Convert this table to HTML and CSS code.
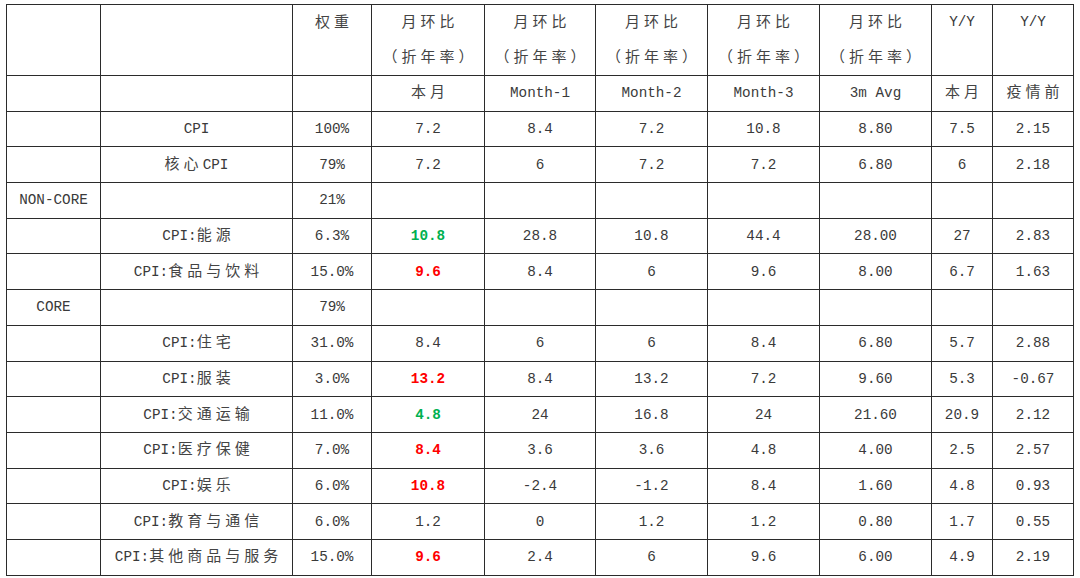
FILE: index.html
```html
<!DOCTYPE html>
<html lang="zh-CN">
<head>
<meta charset="utf-8">
<title>CPI</title>
<link rel="stylesheet" href="styles.css">
</head>
<body>
<table class="cpi">
<colgroup>
<col class="c1"><col class="c2"><col class="c3"><col class="c4"><col class="c5"><col class="c6"><col class="c7"><col class="c8"><col class="c9"><col class="c10">
</colgroup>
<tr class="head">
<td></td><td></td>
<td><span class="zh">权重</span></td>
<td><span class="zh">月环比</span><br><span class="zh">（折年率）</span></td>
<td><span class="zh">月环比</span><br><span class="zh">（折年率）</span></td>
<td><span class="zh">月环比</span><br><span class="zh">（折年率）</span></td>
<td><span class="zh">月环比</span><br><span class="zh">（折年率）</span></td>
<td><span class="zh">月环比</span><br><span class="zh">（折年率）</span></td>
<td>Y/Y</td>
<td>Y/Y</td>
</tr>
<tr><td></td><td></td><td></td><td><span class="zh">本月</span></td><td>Month-1</td><td>Month-2</td><td>Month-3</td><td>3m Avg</td><td><span class="zh">本月</span></td><td><span class="zh">疫情前</span></td></tr>
<tr><td></td><td>CPI</td><td>100%</td><td>7.2</td><td>8.4</td><td>7.2</td><td>10.8</td><td>8.80</td><td>7.5</td><td>2.15</td></tr>
<tr><td></td><td><span class="zh mid">核心</span>CPI</td><td>79%</td><td>7.2</td><td>6</td><td>7.2</td><td>7.2</td><td>6.80</td><td>6</td><td>2.18</td></tr>
<tr><td>NON-CORE</td><td></td><td>21%</td><td></td><td></td><td></td><td></td><td></td><td></td><td></td></tr>
<tr><td></td><td>CPI:<span class="zh">能源</span></td><td>6.3%</td><td class="up">10.8</td><td>28.8</td><td>10.8</td><td>44.4</td><td>28.00</td><td>27</td><td>2.83</td></tr>
<tr><td></td><td>CPI:<span class="zh">食品与饮料</span></td><td>15.0%</td><td class="dn">9.6</td><td>8.4</td><td>6</td><td>9.6</td><td>8.00</td><td>6.7</td><td>1.63</td></tr>
<tr><td>CORE</td><td></td><td>79%</td><td></td><td></td><td></td><td></td><td></td><td></td><td></td></tr>
<tr><td></td><td>CPI:<span class="zh">住宅</span></td><td>31.0%</td><td>8.4</td><td>6</td><td>6</td><td>8.4</td><td>6.80</td><td>5.7</td><td>2.88</td></tr>
<tr><td></td><td>CPI:<span class="zh">服装</span></td><td>3.0%</td><td class="dn">13.2</td><td>8.4</td><td>13.2</td><td>7.2</td><td>9.60</td><td>5.3</td><td>-0.67</td></tr>
<tr><td></td><td>CPI:<span class="zh">交通运输</span></td><td>11.0%</td><td class="up">4.8</td><td>24</td><td>16.8</td><td>24</td><td>21.60</td><td>20.9</td><td>2.12</td></tr>
<tr><td></td><td>CPI:<span class="zh">医疗保健</span></td><td>7.0%</td><td class="dn">8.4</td><td>3.6</td><td>3.6</td><td>4.8</td><td>4.00</td><td>2.5</td><td>2.57</td></tr>
<tr><td></td><td>CPI:<span class="zh">娱乐</span></td><td>6.0%</td><td class="dn">10.8</td><td>-2.4</td><td>-1.2</td><td>8.4</td><td>1.60</td><td>4.8</td><td>0.93</td></tr>
<tr><td></td><td>CPI:<span class="zh">教育与通信</span></td><td>6.0%</td><td>1.2</td><td>0</td><td>1.2</td><td>1.2</td><td>0.80</td><td>1.7</td><td>0.55</td></tr>
<tr><td></td><td>CPI:<span class="zh">其他商品与服务</span></td><td>15.0%</td><td class="dn">9.6</td><td>2.4</td><td>6</td><td>9.6</td><td>6.00</td><td>4.9</td><td>2.19</td></tr>
</table>
</body>
</html>
```

FILE: styles.css
```css
html, body {
  margin: 0;
  background: #ffffff;
}
body {
  padding: 4px 7px 0 6px;
}
.cpi {
  border-collapse: collapse;
  table-layout: fixed;
  width: 1067px;
  font-family: "Liberation Mono", "Noto Sans CJK SC", monospace;
  font-size: 14.3px;
  color: #3a3a3a;
}
.c1 { width: 94px; }
.c2 { width: 192px; }
.c3 { width: 79px; }
.c4 { width: 113px; }
.c5 { width: 111px; }
.c6 { width: 112px; }
.c7 { width: 112px; }
.c8 { width: 112px; }
.c9 { width: 61px; }
.c10 { width: 81px; }
.cpi tr {
  height: 35.7px;
}
.cpi tr.head {
  height: 70px;
}
.cpi td {
  border: 1px solid #2b2b2b;
  text-align: center;
  vertical-align: middle;
  padding: 0;
  line-height: 18px;
  white-space: nowrap;
}
.cpi tr.head td {
  vertical-align: top;
  line-height: 35px;
}
.zh {
  display: inline-block;
  vertical-align: top;
  line-height: inherit;
  margin-top: -2px;
  font-family: "Noto Sans CJK SC", sans-serif;
  font-size: 15px;
  letter-spacing: 4px;
  margin-right: -4px;
  color: #444;
}
.zh.mid {
  margin-right: 0;
}
.cpi td.up {
  color: #00b050;
  font-weight: bold;
}
.cpi td.dn {
  color: #ff0000;
  font-weight: bold;
}
```
